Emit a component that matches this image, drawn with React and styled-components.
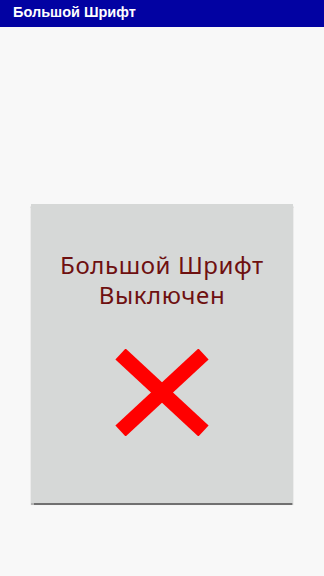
import React from "react";
import styled, { createGlobalStyle } from "styled-components";

const Global = createGlobalStyle`
  html, body { margin: 0; padding: 0; background: #f8f8f8; }
  body { font-family: "Noto Sans", "DejaVu Sans", sans-serif; }
`;

const Page = styled.div`
  width: 324px;
  min-height: 576px;
  background: #f8f8f8;
  display: flex;
  flex-direction: column;
`;

const AppBar = styled.header`
  height: 27px;
  background: #0202a2;
  display: flex;
  align-items: center;
  padding: 0 13px 4px;
  box-sizing: border-box;
  color: #ffffff;
  font-family: "Liberation Sans", Arial, sans-serif;
  font-size: 14.5px;
  font-weight: 700;
`;

const Body = styled.main`
  display: flex;
  justify-content: center;
  padding-top: 177px;
`;

const Card = styled.section`
  width: 262px;
  height: 299px;
  background: #d6d8d7;
  box-shadow: 0 1.5px 1px rgba(0, 0, 0, 0.55);
  display: flex;
  flex-direction: column;
  align-items: center;
  padding-top: 45.5px;
  box-sizing: border-box;
`;

const Message = styled.div`
  color: #6e1010;
  font-family: "Noto Sans", "DejaVu Sans", sans-serif;
  font-size: 24px;
  letter-spacing: 0.6px;
  line-height: 30px;
  text-align: center;
`;

const Cross = styled.svg`
  margin-top: 39.5px;
  display: block;
`;

export default function App() {
  return (
    <Page>
      <Global />
      <AppBar>Большой Шрифт</AppBar>
      <Body>
        <Card>
          <Message>
            Большой Шрифт
            <br />
            Выключен
          </Message>
          <Cross width="94" height="87" viewBox="0 0 94 87">
            <line x1="5.5" y1="5" x2="88.5" y2="82" stroke="#ff0000" strokeWidth="15" />
            <line x1="88.5" y1="5" x2="5.5" y2="82" stroke="#ff0000" strokeWidth="15" />
          </Cross>
        </Card>
      </Body>
    </Page>
  );
}
